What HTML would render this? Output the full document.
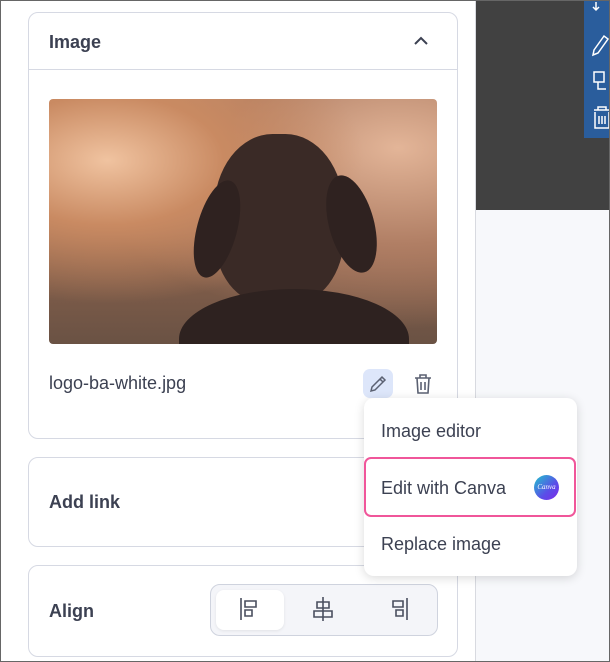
<!DOCTYPE html>
<html><head><style>
*{box-sizing:border-box;margin:0;padding:0}
body{width:610px;height:662px;overflow:hidden;background:#fff;font-family:"Liberation Sans",sans-serif;color:#3c4152;position:relative}
.card{position:absolute;left:28px;width:430px;border:1px solid #d6d9e3;border-radius:10px;background:#fff}
.t{position:absolute;font-size:18px;color:#3c4152}
</style></head><body>
<div style="position:absolute;left:475px;top:0;width:1px;height:662px;background:#d8dae0"></div>
<div style="position:absolute;left:476px;top:0;width:134px;height:210px;background:#414141"></div>
<div style="position:absolute;left:476px;top:210px;width:134px;height:452px;background:#f7f8fb"></div>
<div style="position:absolute;left:584px;top:0;width:26px;height:138px;background:#2a5d9c"></div>
<svg style="position:absolute;left:584px;top:0" width="26" height="138" fill="none" stroke="#fff" stroke-width="1.5">
<path d="M12 2v8M9 7l3 3 3-3"/>
<path d="M10 50l10-14 4 3-10 14-5 2z"/>
<path d="M10 72h10v10h-10zM14 82v7h8"/>
<path d="M10 110h16M14 110v-3h8v3M11 112v16h14v-16M15 116v8M18 116v8M21 116v8"/>
</svg>
<div class="card" style="top:12px;height:427px">
<div style="height:57px;border-bottom:1px solid #d6d9e3;position:relative">
<div class="t" style="left:20px;top:19px;font-weight:bold;font-size:18px">Image</div>
<svg style="position:absolute;left:384px;top:22px" width="16" height="12" fill="none" stroke="#3c4152" stroke-width="2"><path d="M2 9l6-6 6 6"/></svg>
</div>
</div>
<div style="position:absolute;left:49px;top:99px;width:388px;height:245px;border-radius:4px;overflow:hidden;background:radial-gradient(ellipse at 15% 25%,#f0c3a0 0,#c98a62 25%,transparent 55%),radial-gradient(ellipse at 90% 20%,#e3b598 0,#b07e64 35%,transparent 65%),linear-gradient(180deg,#c0906f,#8a624c 60%,#6a5244)">
<div style="position:absolute;left:165px;top:35px;width:130px;height:170px;background:#3a2a26;border-radius:45% 45% 40% 40%"></div>
<div style="position:absolute;left:130px;top:190px;width:230px;height:100px;background:#2e2220;border-radius:50% 50% 0 0"></div>
<div style="position:absolute;left:148px;top:80px;width:40px;height:100px;background:#2f2220;border-radius:50%;transform:rotate(15deg)"></div>
<div style="position:absolute;left:280px;top:75px;width:45px;height:100px;background:#2f2220;border-radius:50%;transform:rotate(-15deg)"></div>
</div>
<div class="t" style="left:49px;top:373px">logo-ba-white.jpg</div>
<div style="position:absolute;left:363px;top:369px;width:30px;height:29px;background:#dde6fa;border-radius:7px"></div>
<svg style="position:absolute;left:366px;top:372px" width="24" height="24" fill="none" stroke="#5b6172" stroke-width="1.5"><path d="M5 19l1-4 10-10 3 3-10 10zM14 7l3 3"/></svg>
<svg style="position:absolute;left:412px;top:372px" width="22" height="24" fill="none" stroke="#5b6172" stroke-width="1.6"><path d="M3 6h16M8 6V3h6v3M5 6l1 15h10l1-15M9 10v8M13 10v8"/></svg>
<div class="card" style="top:457px;height:90px"><div class="t" style="left:20px;top:34px;font-weight:bold">Add link</div></div>
<div class="card" style="top:565px;height:92px"><div class="t" style="left:20px;top:35px;font-weight:bold">Align</div></div>
<div style="position:absolute;left:210px;top:584px;width:228px;height:52px;border:1px solid #cfd3de;border-radius:10px;background:#f4f5f9"></div>
<div style="position:absolute;left:216px;top:590px;width:68px;height:40px;background:#fff;border-radius:8px;box-shadow:0 1px 3px rgba(0,0,0,.08)"></div>
<svg style="position:absolute;left:230px;top:595px" width="200" height="30" fill="none" stroke="#4a4f5f" stroke-width="1.6">
<path d="M11 3v22M15 6h11v6h-11zM15 15h7v6h-7z"/>
<path d="M93 2v24M87 7h12v6h-12zM84 16h18v6h-18z"/>
<path d="M177 3v22M163 6h10v6h-10zM166 15h7v6h-7z"/>
</svg>
<div style="position:absolute;left:364px;top:398px;width:213px;height:178px;background:#fff;border-radius:10px;box-shadow:0 2px 10px rgba(0,0,0,.15)"></div>
<div class="t" style="left:381px;top:421px">Image editor</div>
<div style="position:absolute;left:364px;top:457px;width:212px;height:60px;border:2px solid #f0569a;border-radius:7px"></div>
<div class="t" style="left:381px;top:478px">Edit with Canva</div>
<div style="position:absolute;left:534px;top:475px;width:25px;height:25px;border-radius:50%;background:linear-gradient(135deg,#20c4cb,#5a4ee8 60%,#7d2ae8);color:#fff;font:italic 7px 'Liberation Serif',serif;text-align:center;line-height:25px">Canva</div>
<div class="t" style="left:381px;top:534px">Replace image</div>
<div style="position:absolute;left:0;top:0;width:610px;height:662px;border:1px solid #666;pointer-events:none"></div>
</body></html>
